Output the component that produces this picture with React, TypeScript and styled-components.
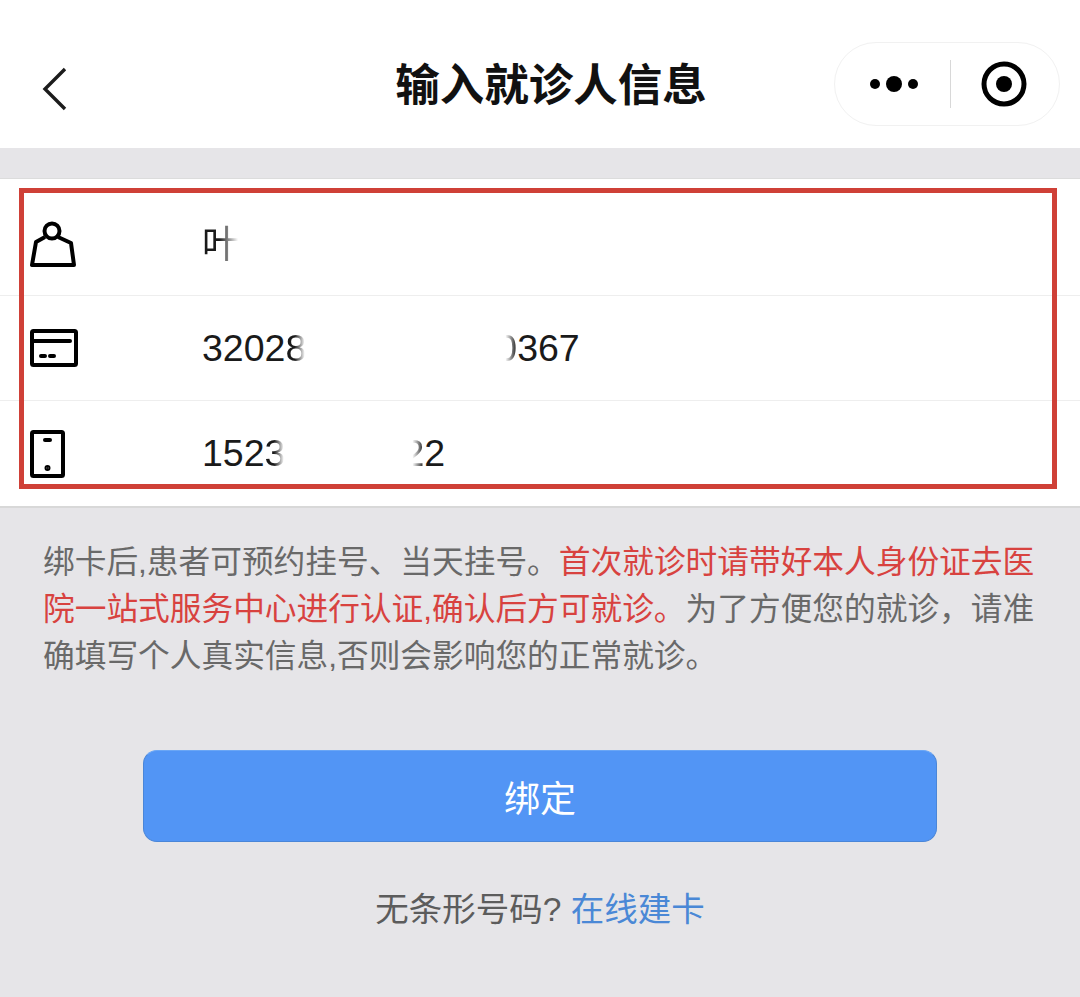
import styled, { createGlobalStyle } from "styled-components";

const GlobalStyle = createGlobalStyle`
  html, body {
    margin: 0;
    padding: 0;
    background: #e6e5e8;
  }
  * {
    box-sizing: border-box;
  }
`;

function App() {
  return (
    <>
      <GlobalStyle />
      <Page>
        <NavBar>
          <BackButton>
            <svg width="26" height="44" viewBox="0 0 26 44" fill="none">
              <path d="M23 2 L3 22 L23 42" stroke="#1c1c1c" strokeWidth="3.4" />
            </svg>
          </BackButton>
          <Title>输入就诊人信息</Title>
          <Capsule>
            <svg width="50" height="20" viewBox="0 0 50 20" fill="#000">
              <circle cx="6" cy="10" r="5" />
              <circle cx="25" cy="10" r="8" />
              <circle cx="44" cy="10" r="5" />
            </svg>
            <CapsuleDivider />
            <svg width="46" height="46" viewBox="0 0 46 46" fill="none">
              <circle cx="23" cy="23" r="20" stroke="#000" strokeWidth="5" />
              <circle cx="23" cy="23" r="8" fill="#000" />
            </svg>
          </Capsule>
        </NavBar>

        <FormCard>
          <Highlight />
          <FormRow $height={117} $offset={14}>
            <IconCell>
              <svg width="46" height="46" viewBox="0 0 46 46" fill="none" stroke="#000" strokeWidth="4" strokeLinejoin="round">
                <circle cx="22" cy="10" r="7.5" />
                <path d="M15 16 L6 21 L2 44 L44 44 L41 22 L28 16" />
              </svg>
            </IconCell>
            <Value>
              <FadeRight>叶</FadeRight>
              <Smudge $width={70} />
            </Value>
          </FormRow>
          <FormRow $height={105}>
            <IconCell>
              <svg width="48" height="38" viewBox="0 0 48 38" fill="none" stroke="#000" strokeWidth="4" strokeLinejoin="round" strokeLinecap="round">
                <rect x="2" y="2" width="44" height="34" rx="1.5" />
                <path d="M2 12 H40" />
                <path d="M11 27 H15 M20 27 H24" />
              </svg>
            </IconCell>
            <Value>
              3202<FadeRight>8</FadeRight>
              <Smudge $width={190} />
              <FadeLeft>0</FadeLeft>367
            </Value>
          </FormRow>
          <FormRow $height={105}>
            <IconCell>
              <svg width="36" height="48" viewBox="0 0 36 48" fill="none" stroke="#000" strokeWidth="4" strokeLinejoin="round" strokeLinecap="round">
                <rect x="2" y="2" width="31" height="44" rx="1.5" />
                <path d="M15 10 H20" />
                <circle cx="17.5" cy="38" r="1" fill="#000" />
              </svg>
            </IconCell>
            <Value>
              152<FadeRight>3</FadeRight>
              <Smudge $width={118} />
              <FadeLeft>2</FadeLeft>2
            </Value>
          </FormRow>
        </FormCard>

        <Notice>
          绑卡后,患者可预约挂号、当天挂号。
          <NoticeWarning>首次就诊时请带好本人身份证去医院一站式服务中心进行认证,确认后方可就诊。</NoticeWarning>
          为了方便您的就诊，请准确填写个人真实信息,否则会影响您的正常就诊。
        </Notice>

        <BindButton>绑定</BindButton>

        <Footer>
          无条形号码? <FooterLink>在线建卡</FooterLink>
        </Footer>
      </Page>
    </>
  );
}

const Page = styled.div`
  width: 1080px;
  height: 997px;
  overflow: hidden;
  background: #e6e5e8;
  font-family: "Liberation Sans", "Noto Sans CJK SC", sans-serif;
`;

const NavBar = styled.header`
  height: 148px;
  background: #fff;
  display: grid;
  grid-template-columns: 1fr auto 1fr;
  align-items: center;
  padding: 0 20px 0 42px;
`;

const BackButton = styled.div`
  display: flex;
  align-items: center;
  padding-top: 30px;
`;

const Title = styled.h1`
  margin: 0;
  padding-top: 24px;
  font-size: 44.5px;
  font-weight: 700;
  color: #111;
  line-height: 1;
`;

const Capsule = styled.div`
  justify-self: end;
  width: 226px;
  height: 84px;
  margin-top: 20px;
  border: 1px solid #f1f1f1;
  border-radius: 42px;
  display: flex;
  align-items: center;
  justify-content: space-between;
  padding: 0 32px 0 34px;
`;

const CapsuleDivider = styled.div`
  width: 1px;
  height: 48px;
  background: #d8d8d8;
`;

const FormCard = styled.section`
  position: relative;
  margin-top: 30px;
  background: #fff;
  border-top: 1px solid #dcdcdc;
  border-bottom: 2px solid #d8d8d8;
`;

const Highlight = styled.div`
  position: absolute;
  left: 19px;
  top: 9px;
  width: 1038px;
  height: 301px;
  border: 5px solid #cf4037;
  pointer-events: none;
`;

const FormRow = styled.div<{ $height: number; $offset?: number }>`
  height: ${(p) => p.$height}px;
  padding-top: ${(p) => p.$offset ?? 0}px;
  display: flex;
  align-items: center;
  border-bottom: 1px solid #eeeeee;

  &:last-child {
    border-bottom: none;
  }
`;

const IconCell = styled.div`
  flex: 0 0 202px;
  padding-left: 30px;
  display: flex;
  align-items: center;

  svg {
    display: block;
  }
`;

const Value = styled.div`
  display: flex;
  align-items: center;
  font-size: 37.5px;
  line-height: 1.2;
  color: #1a1a1a;
`;

const FadeRight = styled.span`
  -webkit-mask-image: linear-gradient(to right, #000 45%, transparent 95%);
  mask-image: linear-gradient(to right, #000 45%, transparent 95%);
`;

const FadeLeft = styled.span`
  -webkit-mask-image: linear-gradient(to right, transparent 45%, #000 100%);
  mask-image: linear-gradient(to right, transparent 45%, #000 100%);
`;

const Smudge = styled.span<{ $width: number }>`
  width: ${(p) => p.$width}px;
  height: 16px;
`;

const Notice = styled.p`
  margin: 0;
  padding: 31px 42px 0 43px;
  font-size: 31.7px;
  line-height: 47px;
  color: #696969;
`;

const NoticeWarning = styled.span`
  color: #d8423f;
`;

const BindButton = styled.button`
  display: block;
  width: 794px;
  height: 92px;
  margin: 70px auto 0;
  background: #5295f5;
  border: 1px solid #4a86d8;
  border-top-color: #6aa6f5;
  border-radius: 14px;
  color: #fff;
  font-family: inherit;
  font-size: 36px;
`;

const Footer = styled.div`
  margin-top: 44px;
  text-align: center;
  font-size: 33.5px;
  line-height: 48px;
  color: #5c5c5c;
`;

const FooterLink = styled.span`
  color: #4a88d6;
`;

export default App;
